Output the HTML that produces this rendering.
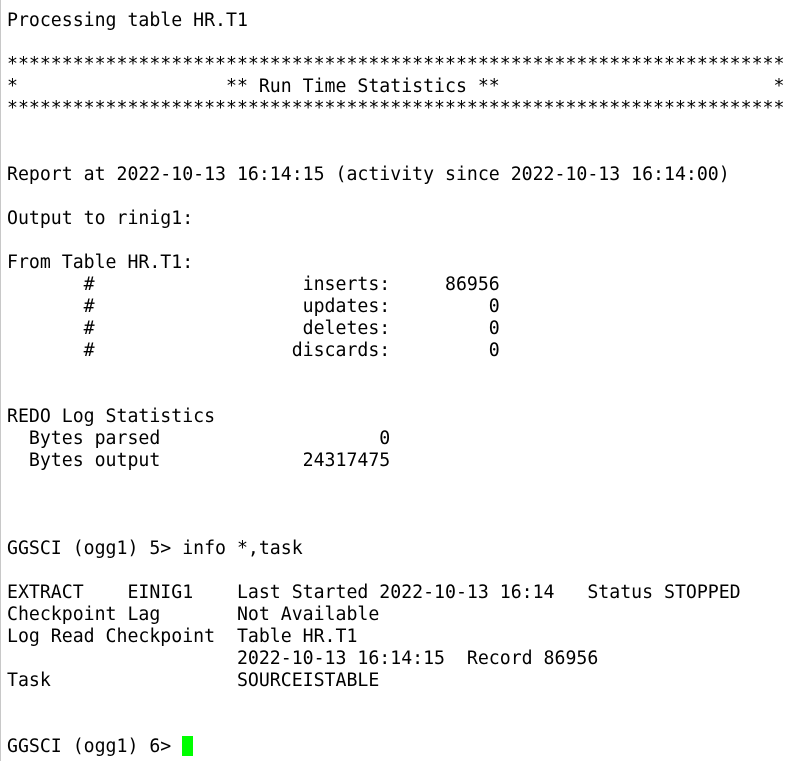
<!DOCTYPE html>
<html><head><meta charset="utf-8"><style>
html,body{margin:0;padding:0;background:#fff;}
body{width:803px;height:761px;overflow:hidden;position:relative;border-left:1px solid #c8c8c8;box-sizing:border-box;}
pre{margin:0;padding:10px 0 0 6px;font-family:"DejaVu Sans Mono","Liberation Mono",monospace;font-size:18.2px;line-height:22px;color:#000;white-space:pre;}
.cur{display:inline-block;width:11px;height:20px;background:#00ff00;vertical-align:-4px;}
</style></head><body><pre>Processing table HR.T1

***********************************************************************
*                   ** Run Time Statistics **                         *
***********************************************************************


Report at 2022-10-13 16:14:15 (activity since 2022-10-13 16:14:00)

Output to rinig1:

From Table HR.T1:
       #                   inserts:     86956
       #                   updates:         0
       #                   deletes:         0
       #                  discards:         0


REDO Log Statistics
  Bytes parsed                    0
  Bytes output             24317475



GGSCI (ogg1) 5&gt; info *,task

EXTRACT    EINIG1    Last Started 2022-10-13 16:14   Status STOPPED
Checkpoint Lag       Not Available
Log Read Checkpoint  Table HR.T1
                     2022-10-13 16:14:15  Record 86956
Task                 SOURCEISTABLE


GGSCI (ogg1) 6&gt; <span class="cur"></span></pre></body></html>
